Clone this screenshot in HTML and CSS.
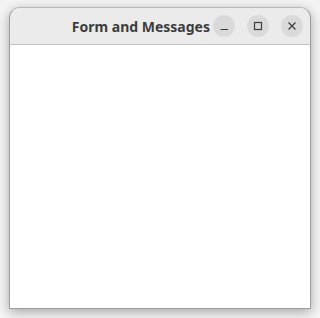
FILE: index.html
```html
<!DOCTYPE html>
<html>
<head>
<meta charset="utf-8">
<link rel="stylesheet" href="styles.css">
</head>
<body>
<div class="window">
  <div class="header">
    <div class="title">Form and Messages</div>
    <div class="controls">
      <div class="btn">
        <svg width="22" height="22" viewBox="0 0 22 22"><path d="M7.5 14.5h7.5" stroke="#3d3d3d" stroke-width="1.2" fill="none"/></svg>
      </div>
      <div class="btn">
        <svg width="22" height="22" viewBox="0 0 22 22"><rect x="7.5" y="7.5" width="7" height="7" stroke="#3d3d3d" stroke-width="1.2" fill="none"/></svg>
      </div>
      <div class="btn">
        <svg width="22" height="22" viewBox="0 0 22 22"><path d="M7.5 7.5l7 7M14.5 7.5l-7 7" stroke="#3d3d3d" stroke-width="1.2" fill="none"/></svg>
      </div>
    </div>
  </div>
  <div class="content"></div>
</div>
</body>
</html>
```
FILE: styles.css
```css
html, body {
  margin: 0;
  padding: 0;
  background: #f4f4f4;
}
body {
  padding: 7px 0 0 9px;
  width: 320px;
  height: 318px;
  box-sizing: border-box;
  overflow: hidden;
}
.window {
  width: 302px;
  height: 302px;
  box-sizing: border-box;
  border: 1px solid #9c9c9c;
  border-top-color: #b8b8b8;
  border-radius: 11px 11px 0 0;
  background: #ffffff;
  box-shadow: 0 3px 12px rgba(0,0,0,0.32);
  display: flex;
  flex-direction: column;
  overflow: hidden;
}
.header {
  height: 37px;
  flex: none;
  box-sizing: border-box;
  background: #ebebeb;
  border-bottom: 1px solid #c4c4c4;
  display: flex;
  align-items: center;
  justify-content: flex-end;
  padding-right: 7px;
}
.title {
  font-family: "Noto Sans", "DejaVu Sans", sans-serif;
  font-weight: bold;
  font-size: 14px;
  color: #3d3d3d;
  margin-right: 3px;
}
.controls {
  display: flex;
  gap: 12px;
}
.btn {
  width: 22px;
  height: 22px;
  border-radius: 50%;
  background: #dadada;
  display: flex;
}
.content {
  flex: 1;
  background: #ffffff;
}
```
